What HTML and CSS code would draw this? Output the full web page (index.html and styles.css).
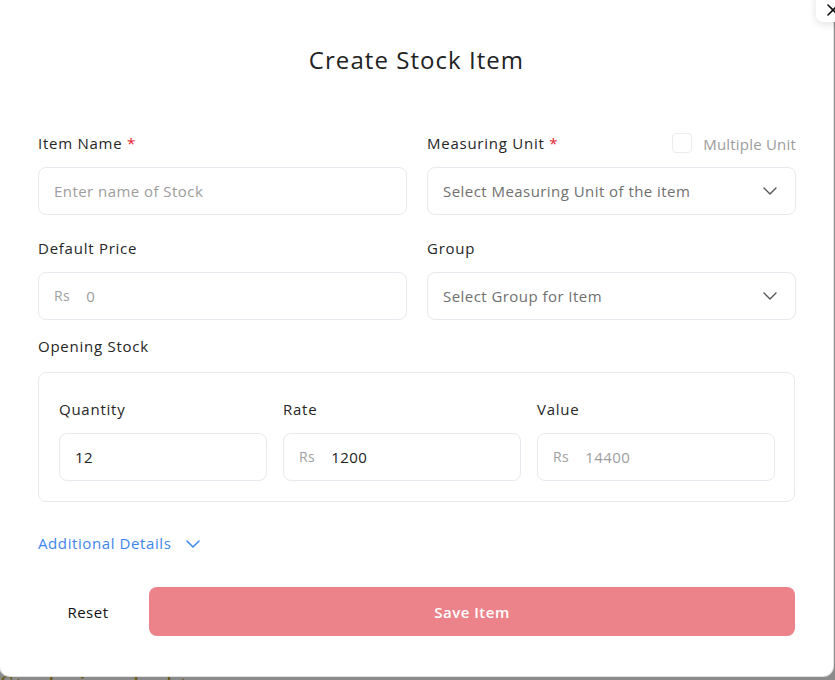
FILE: index.html
```html
<!DOCTYPE html>
<html lang="en">
<head>
<meta charset="utf-8">
<title>Create Stock Item</title>
<link rel="stylesheet" href="styles.css">
</head>
<body>
<div class="backdrop">
  <div class="modal">
    <button class="close" aria-label="Close">
      <svg width="14" height="14" viewBox="0 0 14 14"><path d="M2 2L12 12M12 2L2 12" stroke="#111" stroke-width="1.6" stroke-linecap="round"/></svg>
    </button>
    <h1 class="title">Create Stock Item</h1>

    <div class="grid">
      <div class="field">
        <div class="label-row"><label class="label">Item Name <span class="req">*</span></label></div>
        <div class="input"><span class="ph">Enter name of Stock</span></div>
      </div>
      <div class="field">
        <div class="label-row">
          <label class="label">Measuring Unit <span class="req">*</span></label>
          <span class="check"><span class="box"></span><span class="check-text">Multiple Unit</span></span>
        </div>
        <div class="input select"><span class="ph dark">Select Measuring Unit of the item</span>
          <svg class="chev" width="14" height="8" viewBox="0 0 14 8"><path d="M1 1L7 7L13 1" fill="none" stroke="#555" stroke-width="1.4" stroke-linecap="round" stroke-linejoin="round"/></svg>
        </div>
      </div>
      <div class="field">
        <div class="label-row"><label class="label">Default Price</label></div>
        <div class="input"><span class="rs">Rs</span><span class="ph">0</span></div>
      </div>
      <div class="field">
        <div class="label-row"><label class="label">Group</label></div>
        <div class="input select"><span class="ph dark">Select Group for Item</span>
          <svg class="chev" width="14" height="8" viewBox="0 0 14 8"><path d="M1 1L7 7L13 1" fill="none" stroke="#555" stroke-width="1.4" stroke-linecap="round" stroke-linejoin="round"/></svg>
        </div>
      </div>
    </div>

    <div class="label opening">Opening Stock</div>
    <div class="stock-box">
      <div class="field">
        <div class="label-row"><label class="label">Quantity</label></div>
        <div class="input"><span class="val">12</span></div>
      </div>
      <div class="field">
        <div class="label-row"><label class="label">Rate</label></div>
        <div class="input"><span class="rs">Rs</span><span class="val">1200</span></div>
      </div>
      <div class="field">
        <div class="label-row"><label class="label">Value</label></div>
        <div class="input"><span class="rs">Rs</span><span class="ph">14400</span></div>
      </div>
    </div>

    <div class="additional">Additional Details
      <svg width="14" height="8" viewBox="0 0 14 8"><path d="M1 1L7 7L13 1" fill="none" stroke="#3d86f0" stroke-width="1.5" stroke-linecap="round" stroke-linejoin="round"/></svg>
    </div>

    <div class="actions">
      <button class="reset">Reset</button>
      <button class="save">Save Item</button>
    </div>
  </div>
  <div class="behind"><span>Stocks in a doubt</span></div>
</div>
</body>
</html>
```

FILE: styles.css
```css
* { box-sizing: border-box; }
html, body { margin: 0; padding: 0; height: 680px; overflow: hidden; }
body {
  font-family: "Open Sans", "Liberation Sans", sans-serif;
  background: #8b8b8b;
  color: #222;
  letter-spacing: 0.45px;
}
.backdrop { position: relative; height: 680px; }
.modal {
  position: relative;
  z-index: 2;
  width: 833px;
  height: 676px;
  background: #fff;
  border-radius: 0 0 10px 10px;
  box-shadow: 0 0 0 1px #e2e2e2;
  padding: 42px 38px 0 38px;
  display: flex;
  flex-direction: column;
}
.close {
  position: absolute;
  left: 816px;
  top: -9px;
  width: 32px;
  height: 31px;
  border: none;
  background: #fff;
  border-radius: 7px;
  box-shadow: 0 2px 8px rgba(0,0,0,0.12);
  padding: 0;
  display: flex;
  align-items: center;
  justify-content: center;
}
.close svg { margin-left: 2px; margin-top: 6px; }
.title {
  margin: 0;
  text-align: center;
  font-size: 24px;
  line-height: 35px;
  font-weight: 500;
  color: #222;
  letter-spacing: 1.05px;
}
.grid {
  margin-top: 56px;
  display: grid;
  grid-template-columns: 369px 369px;
  column-gap: 20px;
  row-gap: 23px;
}
.field { display: flex; flex-direction: column; }
.label-row {
  display: flex;
  justify-content: space-between;
  align-items: center;
  height: 21px;
  margin-bottom: 13px;
}
.label {
  font-size: 15px;
  line-height: 21px;
  font-weight: 500;
  color: #262626;
  letter-spacing: 0.75px;
}
.req { color: #e5202e; }
.check { display: flex; align-items: center; gap: 11px; }
.box {
  width: 20px; height: 20px;
  border: 1px solid #ececf0;
  border-radius: 4px;
  margin-top: -2px;
}
.check-text { font-size: 15px; color: #9c9c9c; font-weight: 500; letter-spacing: 0.2px; }
.input {
  height: 48px;
  border: 1px solid #e8e9ee;
  border-radius: 8px;
  display: flex;
  align-items: center;
  padding: 0 15px 1px;
  font-size: 15px;
}
.select { justify-content: space-between; padding-right: 18px; }
.ph { color: #9d9d9d; }
.ph.dark { color: #707070; }
.val { color: #222; }
.rs { color: #a0a0a0; font-size: 14px; margin-right: 16px; }
.opening { margin-top: 16px; }
.stock-box {
  margin-top: 15px;
  border: 1px solid #e8e9ee;
  border-radius: 8px;
  padding: 26px 21px 20px 20px;
  display: grid;
  grid-template-columns: 208px 238px 238px;
  column-gap: 16px;
}
.additional {
  margin-top: 31px;
  display: flex;
  align-items: center;
  gap: 14px;
  font-size: 15px;
  line-height: 21px;
  font-weight: 500;
  color: #3d86f0;
  letter-spacing: 0.6px;
}
.actions {
  margin-top: 33px;
  display: flex;
  gap: 11px;
}
.reset {
  width: 100px;
  height: 49px;
  border: none;
  background: transparent;
  font-family: inherit;
  font-size: 15px;
  font-weight: 500;
  color: #111;
  letter-spacing: 0.5px;
}
.save {
  flex: 1;
  height: 49px;
  border: none;
  border-radius: 8px;
  background: #ec838a;
  color: #fff;
  font-family: inherit;
  font-size: 15px;
  font-weight: 600;
  letter-spacing: 0.5px;
}
.behind {
  position: absolute;
  left: 0; top: 676px;
  width: 835px;
  height: 30px;
  z-index: 1;
  background: #8b8b8b;
  overflow: hidden;
}
.behind span {
  display: block;
  margin-top: -6px;
  font-size: 26px;
  color: #6d5a12;
  font-family: "Liberation Serif", serif;
}
```
